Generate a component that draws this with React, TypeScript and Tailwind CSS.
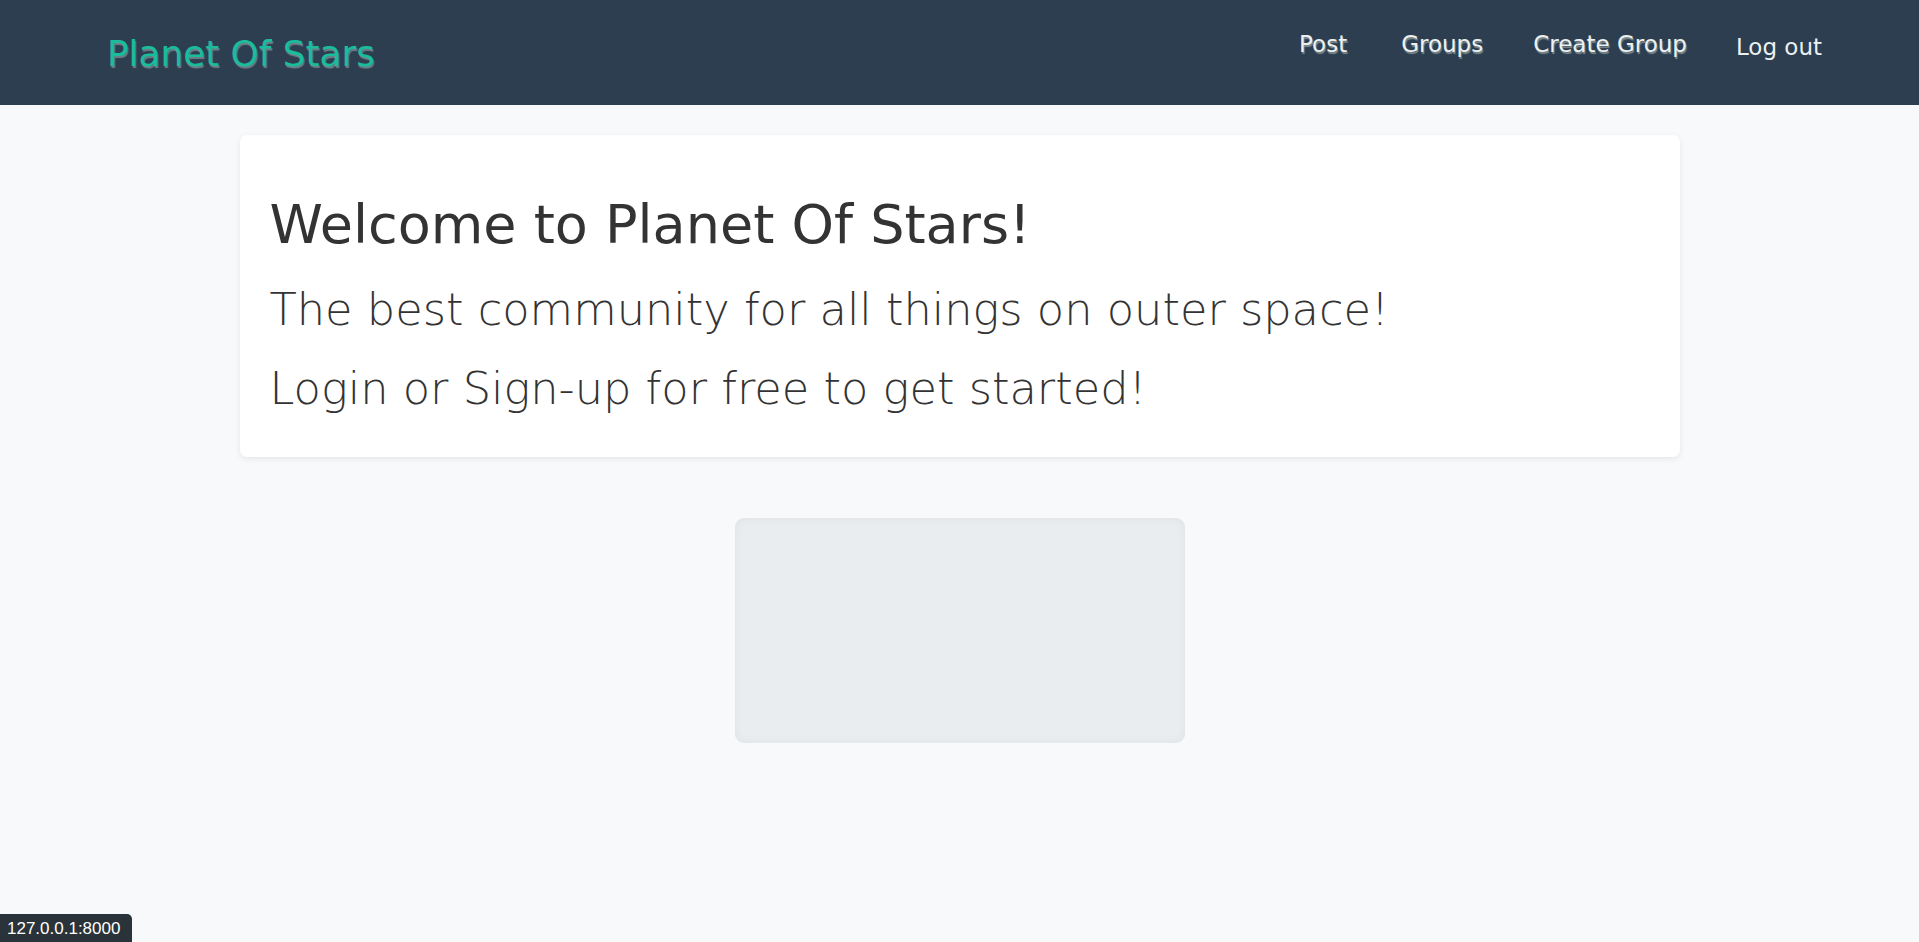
import React from "react";

export default function App() {
  return (
    <div className="min-h-[942px] bg-[#f8f9fa] font-['DejaVu_Sans',sans-serif]">
      <nav className="flex h-[105px] items-start justify-between bg-[#2c3e50] pl-[107px] pr-[97px]">
        <a className="pt-[36px] text-[35.8px] leading-[35px] text-[#1abc9c] [text-shadow:1px_2px_1px_#6f7f88]">
          Planet Of Stars
        </a>
        <ul className="flex items-start pt-[33px] text-[23px] leading-[23px] text-[#ecf0f1]">
          <li className="[text-shadow:1px_2px_1px_#7f8c8d]">Post</li>
          <li className="ml-[54px] [text-shadow:1px_2px_1px_#7f8c8d]">Groups</li>
          <li className="ml-[50px] [text-shadow:1px_2px_1px_#7f8c8d]">Create Group</li>
          <li className="ml-[49px] mt-[3px]">Log out</li>
        </ul>
      </nav>

      <main className="flex flex-col items-center">
        <section className="mt-[30px] w-[1440px] rounded-[7px] bg-white px-[30px] pb-[40px] pt-[58px] text-[#333333] shadow-[0_2px_6px_rgba(0,0,0,0.08)]">
          <h1 className="mb-[25px] text-[54px] leading-[64px]">Welcome to Planet Of Stars!</h1>
          <p className="mb-[23px] text-[44.7px] font-light leading-[56px]">
            The best community for all things on outer space!
          </p>
          <p className="text-[44.7px] font-light leading-[56px]">Login or Sign-up for free to get started!</p>
        </section>

        <div className="mt-[61px] h-[225px] w-[450px] rounded-[9px] bg-[#eaedef] shadow-[inset_0_0_10px_rgba(0,0,0,0.05)]" />
      </main>

      <div className="fixed bottom-0 left-0 flex h-[28px] w-[132px] items-center rounded-tr-[5px] bg-[#2a3339] pl-[7px] font-['Liberation_Sans',sans-serif] text-[17px] leading-none text-white">
        127.0.0.1:8000
      </div>
    </div>
  );
}
